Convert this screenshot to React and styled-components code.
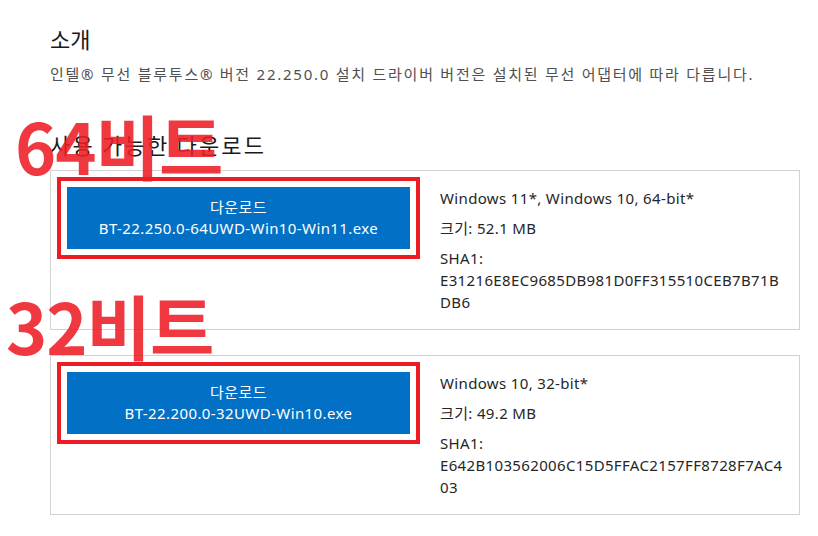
import React from "react";
import styled, { createGlobalStyle } from "styled-components";

const Global = createGlobalStyle`
  html, body { margin: 0; padding: 0; background: #fff; }
  body { font-family: "Noto Sans", "Noto Sans CJK KR", sans-serif; color: #1f1f1f; }
  * { box-sizing: border-box; }
`;

const Page = styled.main`
  padding: 23px 18px 20px 50px;
  width: 818px;
`;

const Heading = styled.h2`
  margin: 0;
  font-family: "Noto Sans CJK KR", sans-serif;
  font-weight: 400;
  font-size: 22px;
  line-height: 30px;
  letter-spacing: ${(p) => p.$spacing || 0}px;
  color: #1a1a1a;
`;

const Intro = styled.p`
  margin: 10px 0 44px;
  font-family: "Noto Sans", "Noto Sans CJK KR", sans-serif;
  font-size: 15px;
  line-height: 22px;
  letter-spacing: 1.75px;
  color: #505050;
`;

const CardList = styled.div`
  display: flex;
  flex-direction: column;
  gap: 25px;
  margin-top: 11px;
`;

const Card = styled.section`
  position: relative;
  border: 1px solid #d2d2d2;
  padding: 16px;
  display: grid;
  grid-template-columns: 1fr 1fr;
  column-gap: 30px;
  align-items: start;
`;

const DownloadButton = styled.a`
  display: flex;
  flex-direction: column;
  align-items: center;
  justify-content: center;
  height: 62px;
  background: #0270c4;
  color: #fff;
  font-size: 15px;
  line-height: 21px;
  letter-spacing: 0.4px;
  text-decoration: none;
  outline: 4px solid #ed1c24;
  outline-offset: 6px;
`;

const Info = styled.div`
  font-size: 15px;
  line-height: 22px;
  letter-spacing: 0.35px;
  color: #262626;
  word-break: break-all;
`;

const InfoLine = styled.p`
  margin: 0 0 8px;
  &:last-child { margin-bottom: 0; }
`;

const Tag = styled.span`
  position: absolute;
  left: ${(p) => p.$left}px;
  top: ${(p) => p.$top}px;
  font-family: "Noto Sans CJK KR", sans-serif;
  font-weight: 700;
  font-size: 70px;
  line-height: 1;
  letter-spacing: -1px;
  color: rgba(237, 28, 36, 0.88);
  white-space: nowrap;
  pointer-events: none;
`;

const downloads = [
  {
    tag: "64비트",
    tagLeft: -36,
    tagTop: -61,
    file: "BT-22.250.0-64UWD-Win10-Win11.exe",
    os: "Windows 11*, Windows 10, 64-bit*",
    size: "52.1 MB",
    sha: "E31216E8EC9685DB981D0FF315510CEB7B71BDB6",
  },
  {
    tag: "32비트",
    tagLeft: -45,
    tagTop: -66,
    file: "BT-22.200.0-32UWD-Win10.exe",
    os: "Windows 10, 32-bit*",
    size: "49.2 MB",
    sha: "E642B103562006C15D5FFAC2157FF8728F7AC403",
  },
];

export default function App() {
  return (
    <>
      <Global />
      <Page>
        <Heading>소개</Heading>
        <Intro>
          인텔® 무선 블루투스® 버전 22.250.0 설치 드라이버 버전은 설치된 무선 어댑터에 따라 다릅니다.
        </Intro>
        <Heading $spacing={2.2}>사용 가능한 다운로드</Heading>
        <CardList>
          {downloads.map((d) => (
            <Card key={d.file}>
              <DownloadButton href="#">
                <span>다운로드</span>
                <span>{d.file}</span>
              </DownloadButton>
              <Info>
                <InfoLine>{d.os}</InfoLine>
                <InfoLine>크기: {d.size}</InfoLine>
                <InfoLine>
                  SHA1:
                  <br />
                  {d.sha}
                </InfoLine>
              </Info>
              <Tag $left={d.tagLeft} $top={d.tagTop}>{d.tag}</Tag>
            </Card>
          ))}
        </CardList>
      </Page>
    </>
  );
}
